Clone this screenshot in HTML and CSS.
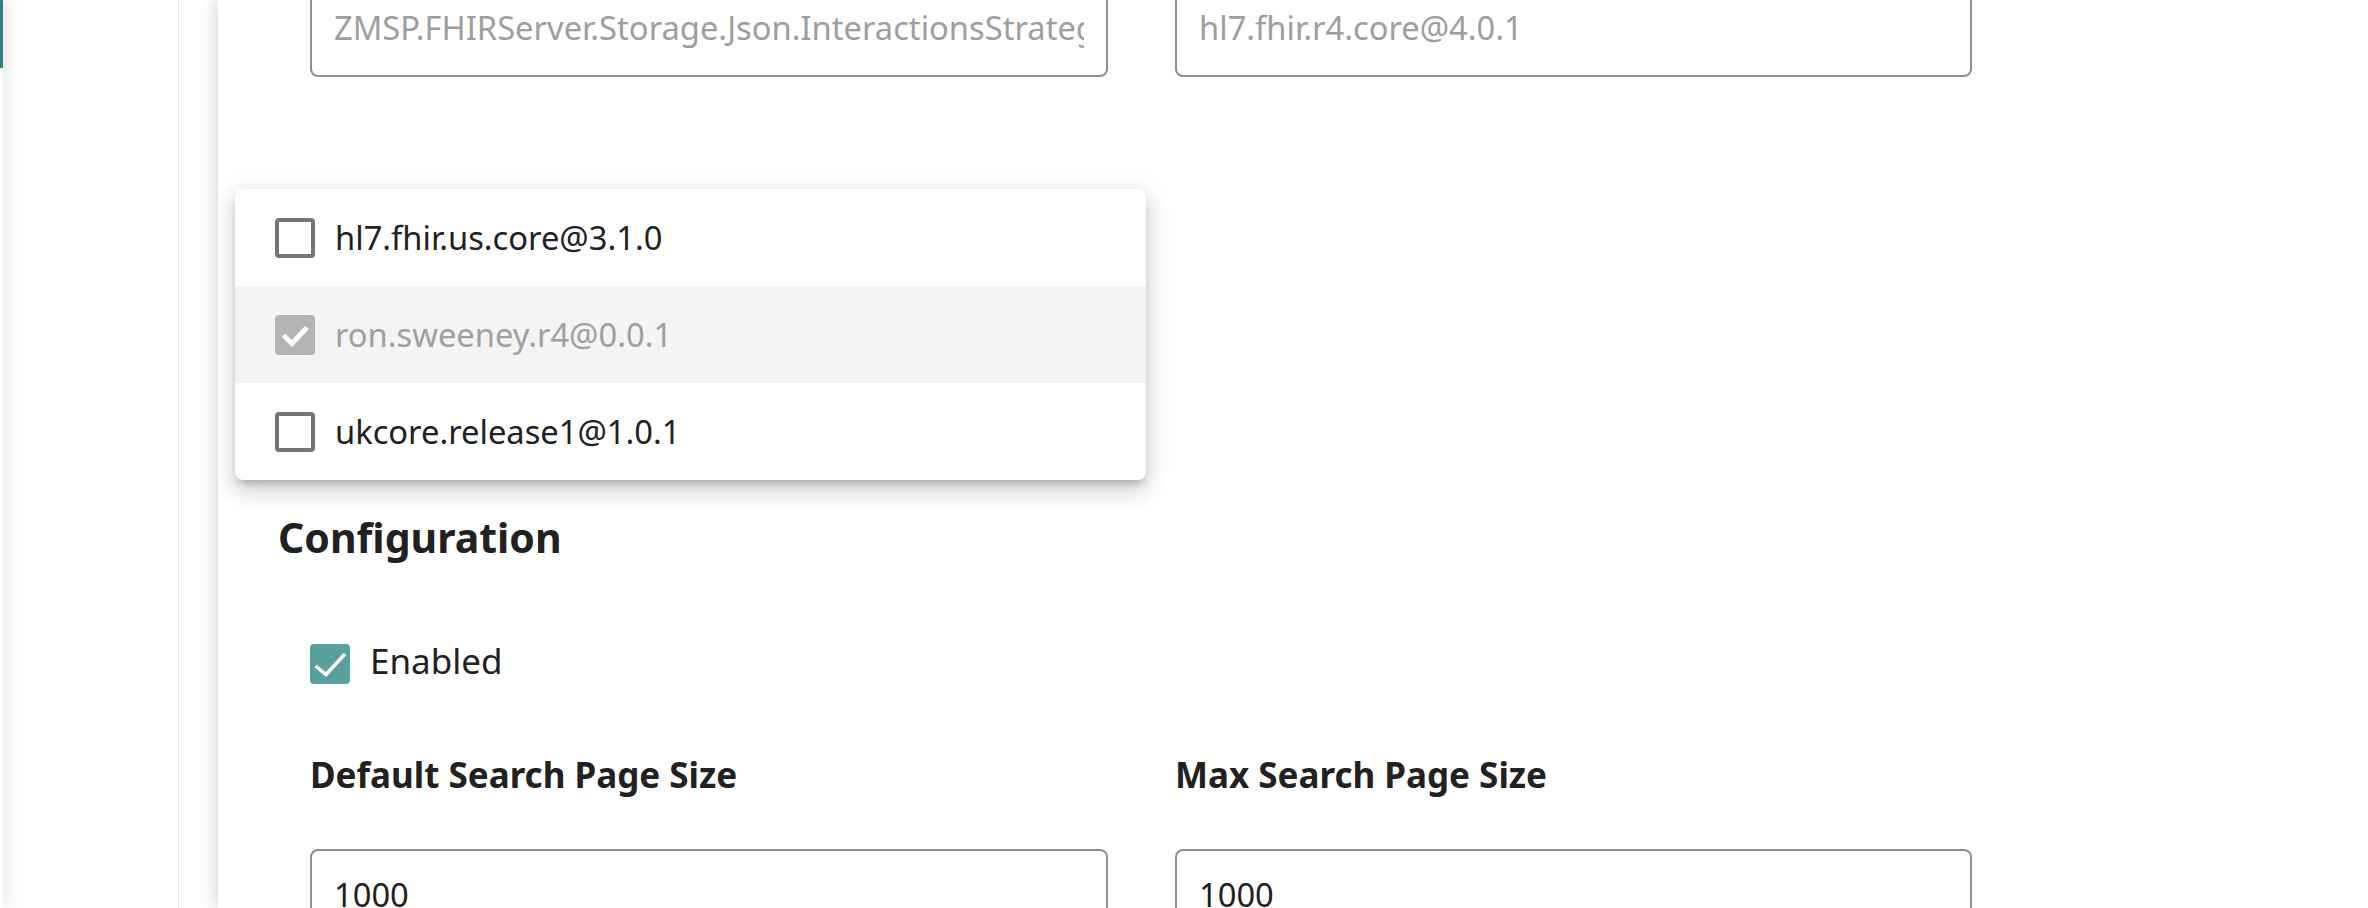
FILE: index.html
```html
<!DOCTYPE html>
<html lang="en">
<head>
<meta charset="utf-8">
<title>FHIR Server Configuration</title>
<link rel="stylesheet" href="styles.css">
</head>
<body>
<div class="app">
  <nav class="rail"><div class="rail-active"></div></nav>
  <aside class="sidebar"></aside>
  <main class="panel">
    <div class="fields">
      <div class="grid2 top-row">
        <input class="field is-disabled" type="text" value="ZMSP.FHIRServer.Storage.Json.InteractionsStrategy" readonly>
        <input class="field is-disabled" type="text" value="hl7.fhir.r4.core@4.0.1" readonly>
      </div>
      <div class="select-anchor">
        <ul class="menu">
          <li class="menu-item"><span class="cb"></span><span>hl7.fhir.us.core@3.1.0</span></li>
          <li class="menu-item is-disabled"><span class="cb cb-disabled"><svg viewBox="0 0 40 40" width="40" height="40"><path d="M8.5 20.5 L17 28.5 L32 12.5" fill="none" stroke="#fff" stroke-width="5"/></svg></span><span>ron.sweeney.r4@0.0.1</span></li>
          <li class="menu-item"><span class="cb"></span><span>ukcore.release1@1.0.1</span></li>
        </ul>
      </div>
    </div>
    <h2 class="section-title">Configuration</h2>
    <div class="fields">
      <div class="check-row">
        <span class="cb cb-on"><svg viewBox="0 0 40 40" width="40" height="40"><path d="M5.5 22 L16 30.5 L35 10" fill="none" stroke="#fff" stroke-width="3.5"/></svg></span>
        <span class="check-label">Enabled</span>
      </div>
      <div class="grid2 size-row">
        <div class="field-group">
          <div class="field-label">Default Search Page Size</div>
          <input class="field" type="text" value="1000">
        </div>
        <div class="field-group">
          <div class="field-label">Max Search Page Size</div>
          <input class="field" type="text" value="1000">
        </div>
      </div>
    </div>
  </main>
</div>
</body>
</html>
```

FILE: styles.css
```css
html, body {
  margin: 0;
  padding: 0;
  height: 100%;
  overflow: hidden;
  background: #fff;
}

body {
  font-family: "Noto Sans", "Open Sans", sans-serif;
  color: #212121;
}

.app {
  display: flex;
  height: 908px;
}

.rail {
  flex: none;
  width: 3px;
  background: #fff;
  position: relative;
  z-index: 2;
  box-shadow: 2px 0 14px rgba(0, 0, 0, 0.32);
}

.rail-active {
  height: 68px;
  background: #3e7c79;
}

.sidebar {
  flex: none;
  box-sizing: border-box;
  width: 176px;
  border-right: 1px solid #e3e3e3;
  background: #fff;
}

.panel {
  flex: 1;
  margin-left: 39px;
  padding-left: 60px;
  background: #fff;
  box-shadow: -3px 0 16px rgba(0, 0, 0, 0.16);
  overflow: hidden;
  position: relative;
  z-index: 1;
}

.fields {
  margin-left: 32px;
}

.grid2 {
  display: grid;
  grid-template-columns: 798px 797px;
  column-gap: 67px;
}

.top-row {
  margin-top: -18px;
}

.field {
  display: block;
  box-sizing: border-box;
  width: 100%;
  height: 95px;
  margin: 0;
  border: 2px solid #8e8e8e;
  border-radius: 8px;
  padding: 20px 22px 25px;
  font-family: "Noto Sans", "Open Sans", sans-serif;
  font-size: 32.7px;
  line-height: 46px;
  color: #212121;
  background: #fff;
  outline: none;
}

.field.is-disabled {
  color: #9e9e9e;
  -webkit-text-fill-color: #9e9e9e;
}

.select-anchor {
  position: relative;
  height: 433px;
}

.menu {
  position: absolute;
  top: 112px;
  left: -75px;
  width: 911px;
  margin: 0;
  padding: 0;
  list-style: none;
  background: #fff;
  border-radius: 8px;
  overflow: hidden;
  box-shadow: 0 6px 8px -4px rgba(0, 0, 0, 0.28), 0 12px 20px 2px rgba(0, 0, 0, 0.1), 0 4px 26px 4px rgba(0, 0, 0, 0.08);
  z-index: 5;
}

.menu-item {
  display: flex;
  align-items: center;
  gap: 20px;
  height: 97px;
  padding-left: 40px;
  font-size: 32.7px;
  color: #212121;
}

.menu-item.is-disabled {
  background: #f4f4f4;
  color: #a0a0a0;
}

.cb {
  flex: none;
  box-sizing: border-box;
  width: 40px;
  height: 40px;
  border: 4px solid #757575;
  border-radius: 4px;
  display: block;
}

.cb svg {
  display: block;
}

.cb-disabled {
  border: none;
  background: #b4b4b4;
}

.cb-on {
  border: none;
  background: #57a09b;
}

.section-title {
  margin: 0;
  font-size: 41px;
  line-height: 54px;
  font-weight: 700;
  color: #212121;
}

.check-row {
  display: flex;
  align-items: center;
  gap: 20px;
  height: 40px;
  margin-top: 80px;
}

.check-label {
  font-size: 35px;
  padding-bottom: 8px;
  color: #212121;
}

.size-row {
  margin-top: 69px;
}

.field-label {
  font-size: 35px;
  line-height: 44px;
  font-weight: 700;
  color: #212121;
  margin-bottom: 52px;
}
```
